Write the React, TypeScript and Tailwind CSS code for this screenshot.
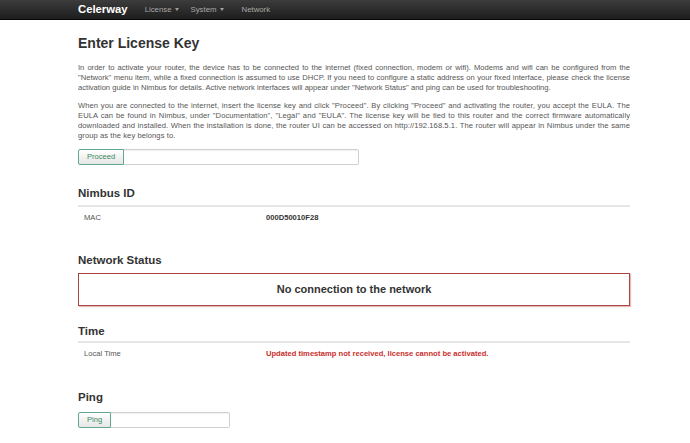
import React from 'react';

const Caret: React.FC = () => (
  <span className="inline-block ml-[3px] align-middle border-x-[2.5px] border-t-[3px] border-x-transparent border-t-[#a0a0a0]" />
);

const InfoRow: React.FC<{ label: string; children: React.ReactNode }> = ({ label, children }) => (
  <div className="flex border-t-2 border-[#e6e6e6] py-[6px] text-[7.6px] leading-[10px]">
    <div className="w-[188px] pl-[6px] text-[#555]">{label}</div>
    <div className="flex-1">{children}</div>
  </div>
);

const ButtonInput: React.FC<{ label: string; width: string }> = ({ label, width }) => (
  <div className={`flex h-[16px] ${width}`}>
    <button className="h-full px-[8px] rounded-l-[2px] border border-[#5fa98a] bg-gradient-to-b from-white to-[#e6e6e6] text-[7.6px] text-[#3b8a62] shadow-[inset_0_1px_0_rgba(255,255,255,0.6)]">
      {label}
    </button>
    <input className="flex-1 min-w-0 w-0 h-full border border-l-0 border-[#d0d0d0] rounded-r-[2px] bg-white shadow-[inset_0_1px_1px_rgba(0,0,0,0.06)] outline-none" />
  </div>
);

export default function App() {
  return (
    <div className="min-h-screen bg-white font-['Liberation_Sans',Arial,sans-serif] text-[#333]">
      <nav className="h-[20px] bg-gradient-to-b from-[#3c3c3c] to-[#1e1e1e] border-b border-[#080808]">
        <div className="flex items-center h-full pl-[78px]">
          <span className="text-white font-bold text-[11.3px] leading-none">Celerway</span>
          <div className="flex items-center text-[7.8px] text-[#a8a8a8] leading-none">
            <span className="ml-[17px]">License<Caret /></span>
            <span className="ml-[12px]">System<Caret /></span>
            <span className="ml-[18px]">Network</span>
          </div>
        </div>
      </nav>

      <main className="pl-[78px] w-[630px]">
        <h1 className="mt-[14px] text-[14px] leading-[18px] font-bold text-[#333]">Enter License Key</h1>

        <p className="mt-[11px] text-[7.6px] leading-[10px] text-[#555] text-justify">
          In order to activate your router, the device has to be connected to the internet (fixed connection, modem or wifi). Modems and wifi can be configured from the "Network" menu item, while a fixed connection is assumed to use DHCP. If you need to configure a static address on your fixed interface, please check the license activation guide in Nimbus for details. Active network interfaces will appear under "Network Status" and ping can be used for troubleshooting.
        </p>
        <p className="mt-[8px] text-[7.6px] leading-[10px] text-[#555] text-justify tracking-[0.07px]">
          When you are connected to the internet, insert the license key and click "Proceed". By clicking "Proceed" and activating the router, you accept the EULA. The EULA can be found in Nimbus, under "Documentation", "Legal" and "EULA". The license key will be tied to this router and the correct firmware automatically downloaded and installed. When the installation is done, the router UI can be accessed on http://192.168.5.1. The router will appear in Nimbus under the same group as the key belongs to.
        </p>

        <div className="mt-[8px]">
          <ButtonInput label="Proceed" width="w-[281px]" />
        </div>

        <h3 className="mt-[21px] mb-[5px] text-[11.5px] leading-[14px] font-bold">Nimbus ID</h3>
        <InfoRow label="MAC">
          <span className="font-bold text-[#333]">000D50010F28</span>
        </InfoRow>

        <h3 className="mt-[24px] mb-[6px] text-[11.5px] leading-[14px] font-bold">Network Status</h3>
        <div className="h-[33px] flex items-center justify-center border border-[#a94442] shadow-[1px_1px_1px_rgba(169,68,66,0.35)]">
          <span className="text-[11px] font-bold text-[#333]">No connection to the network</span>
        </div>

        <h3 className="mt-[18px] mb-[3px] text-[11.5px] leading-[14px] font-bold">Time</h3>
        <InfoRow label="Local Time">
          <span className="font-bold text-[#c9302c]">Updated timestamp not received, license cannot be activated.</span>
        </InfoRow>

        <h3 className="mt-[25px] mb-[8px] text-[11.5px] leading-[14px] font-bold">Ping</h3>
        <ButtonInput label="Ping" width="w-[152px]" />
      </main>
    </div>
  );
}
